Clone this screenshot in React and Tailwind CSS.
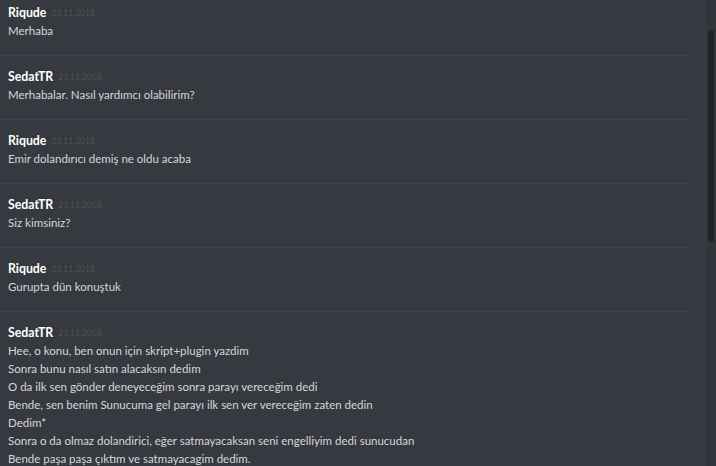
const messages = [
  { name: "Riqude", lines: ["Merhaba"] },
  { name: "SedatTR", lines: ["Merhabalar. Nasıl yardımcı olabilirim?"] },
  { name: "Riqude", lines: ["Emir dolandırıcı demiş ne oldu acaba"] },
  { name: "SedatTR", lines: ["Siz kimsiniz?"] },
  { name: "Riqude", lines: ["Gurupta dün konuştuk"] },
  {
    name: "SedatTR",
    lines: [
      "Hee, o konu, ben onun için skript+plugin yazdim",
      "Sonra bunu nasıl satın alacaksın dedim",
      "O da ilk sen gönder deneyeceğim sonra parayı vereceğim dedi",
      "Bende, sen benim Sunucuma gel parayı ilk sen ver vereceğim zaten dedin",
      "Dedim*",
      "Sonra o da olmaz dolandirici, eğer satmayacaksan seni engelliyim dedi sunucudan",
      "Bende paşa paşa çıktım ve satmayacagim dedim.",
    ],
  },
];

function Message({ m, last }) {
  return (
    <div>
      <div className="pl-[8px] pt-[12px] pb-[15px]">
        <div className="flex h-[18px] items-center gap-[5px]">
          <span className="text-[12.3px] font-bold text-white">{m.name}</span>
          <span className="mt-px text-[8.5px] text-[#4e5157]">23.11.2018</span>
        </div>
        {m.lines.map((l, i) => (
          <div key={i} className="h-[18px] text-[11.5px] leading-[18px] text-[#d6d7d9]">
            {l}
          </div>
        ))}
      </div>
      {!last && <div className="mr-[16px] h-px bg-[#3f4248]" />}
    </div>
  );
}

export default function App() {
  return (
    <div
      className="flex h-[466px] w-[716px] overflow-hidden bg-[#36393f]"
      style={{ fontFamily: "Lato, 'Open Sans', sans-serif" }}
    >
      <div className="-mt-[8px] flex-1">
        {messages.map((m, i) => (
          <Message key={i} m={m} last={i === messages.length - 1} />
        ))}
      </div>
      <div className="flex w-[10px] justify-center bg-[#32353b] pt-[30px]">
        <div className="h-[212px] w-[6px] rounded-[3px] bg-[#202225]" />
      </div>
    </div>
  );
}
